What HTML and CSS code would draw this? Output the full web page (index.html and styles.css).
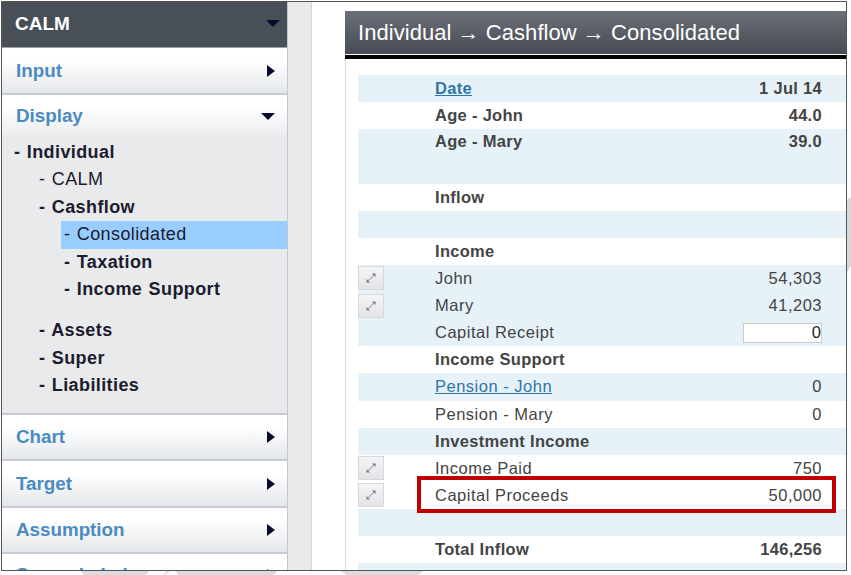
FILE: index.html
```html
<!DOCTYPE html>
<html lang="en">
<head>
    <meta charset="UTF-8">
    <title>CALM - Consolidated</title>
    <link rel="stylesheet" href="styles.css">
</head>
<body>
    <svg class="watermark" width="851" height="575" viewBox="0 0 851 575">
        <polygon points="80,570 150,570 146,575 84,575" fill="#dcdcdc"/>
        <polygon points="163,575 168,570 171,570 165,575" fill="#dcdcdc"/>
        <polygon points="175,570 278,570 274,575 178,575" fill="#dcdcdc"/>
        <polygon points="338,570 425,570 418,575 347,575" fill="#dcdcdc"/>
        <polygon points="847,200 851,197 851,266 847,272" fill="#d8d8d8"/>
    </svg>
    <div class="frame">
        <div class="sidebar">
            <div class="side-head">
                <span>CALM</span>
                <span class="arrow-down"></span>
            </div>
            <div class="side-item">
                <span>Input</span>
                <span class="arrow-right"></span>
            </div>
            <div class="side-item open">
                <span>Display</span>
                <span class="arrow-down"></span>
            </div>
            <div class="side-tree">
                <div class="node lvl1 bold">- Individual</div>
                <div class="node lvl2">- CALM</div>
                <div class="node lvl2 bold">- Cashflow</div>
                <div class="node lvl3 selected">- Consolidated</div>
                <div class="node lvl3 bold">- Taxation</div>
                <div class="node lvl3 bold">- Income Support</div>
                <div class="node lvl2 bold group-start">- Assets</div>
                <div class="node lvl2 bold">- Super</div>
                <div class="node lvl2 bold">- Liabilities</div>
            </div>
            <div class="side-item">
                <span>Chart</span>
                <span class="arrow-right"></span>
            </div>
            <div class="side-item">
                <span>Target</span>
                <span class="arrow-right"></span>
            </div>
            <div class="side-item">
                <span>Assumption</span>
                <span class="arrow-right"></span>
            </div>
            <div class="side-item cut">
                <span>Scenario Lab</span>
                <span class="arrow-right"></span>
            </div>
        </div>
        <div class="gutter"></div>
        <div class="main">
            <div class="panel">
                <div class="panel-title">Individual → Cashflow → Consolidated</div>
                <div class="panel-rule"></div>
                <table class="cash-table">
                    <tr class="alt bold"><td class="c-btn"></td><td><a href="#">Date</a></td><td class="num">1 Jul 14</td></tr>
                    <tr class="bold"><td class="c-btn"></td><td>Age - John</td><td class="num">44.0</td></tr>
                    <tr class="alt bold tall"><td class="c-btn"></td><td>Age - Mary</td><td class="num">39.0</td></tr>
                    <tr class="bold"><td class="c-btn"></td><td>Inflow</td><td class="num"></td></tr>
                    <tr class="alt"><td class="c-btn"></td><td></td><td class="num"></td></tr>
                    <tr class="bold"><td class="c-btn"></td><td>Income</td><td class="num"></td></tr>
                    <tr class="alt"><td class="c-btn"><span class="expand"><svg width="14" height="14" viewBox="0 0 14 14"><path d="M4 10 L10 4" stroke="#b4b8bc" stroke-width="1.5"/><path d="M8 2.5 H11.5 V6 Z M2.5 8 V11.5 H6 Z" fill="#74797e"/></svg></span></td><td>John</td><td class="num">54,303</td></tr>
                    <tr class="alt"><td class="c-btn"><span class="expand"><svg width="14" height="14" viewBox="0 0 14 14"><path d="M4 10 L10 4" stroke="#b4b8bc" stroke-width="1.5"/><path d="M8 2.5 H11.5 V6 Z M2.5 8 V11.5 H6 Z" fill="#74797e"/></svg></span></td><td>Mary</td><td class="num">41,203</td></tr>
                    <tr class="alt"><td class="c-btn"></td><td>Capital Receipt</td><td class="num"><input class="amount" type="text" value="0"></td></tr>
                    <tr class="bold"><td class="c-btn"></td><td>Income Support</td><td class="num"></td></tr>
                    <tr class="alt"><td class="c-btn"></td><td><a href="#">Pension - John</a></td><td class="num">0</td></tr>
                    <tr><td class="c-btn"></td><td>Pension - Mary</td><td class="num">0</td></tr>
                    <tr class="alt bold"><td class="c-btn"></td><td>Investment Income</td><td class="num"></td></tr>
                    <tr><td class="c-btn"><span class="expand"><svg width="14" height="14" viewBox="0 0 14 14"><path d="M4 10 L10 4" stroke="#b4b8bc" stroke-width="1.5"/><path d="M8 2.5 H11.5 V6 Z M2.5 8 V11.5 H6 Z" fill="#74797e"/></svg></span></td><td>Income Paid</td><td class="num">750</td></tr>
                    <tr><td class="c-btn"><span class="expand"><svg width="14" height="14" viewBox="0 0 14 14"><path d="M4 10 L10 4" stroke="#b4b8bc" stroke-width="1.5"/><path d="M8 2.5 H11.5 V6 Z M2.5 8 V11.5 H6 Z" fill="#74797e"/></svg></span></td><td>Capital Proceeds</td><td class="num">50,000</td></tr>
                    <tr class="alt"><td class="c-btn"></td><td></td><td class="num"></td></tr>
                    <tr class="bold"><td class="c-btn"></td><td>Total Inflow</td><td class="num">146,256</td></tr>
                    <tr class="alt"><td class="c-btn"></td><td></td><td class="num"></td></tr>
                </table>
                <div class="callout"></div>
            </div>
        </div>
    </div>
</body>
</html>
```

FILE: styles.css
```css
body {
    margin: 0;
    background: #fff;
    font-family: 'Liberation Sans', Arial, sans-serif;
    color: #333;
}
.watermark {
    position: absolute;
    left: 0;
    top: 0;
}
.frame {
    position: relative;
    display: flex;
    box-sizing: border-box;
    width: 846px;
    height: 570px;
    margin: 1px 0 0 1px;
    border: 1px solid #555;
    overflow: hidden;
    background: #fff;
}
.sidebar {
    width: 285px;
    flex-shrink: 0;
    background: #e8eaec;
    border-right: 1px solid #c4c6d0;
}
.side-head {
    display: flex;
    justify-content: space-between;
    align-items: center;
    box-sizing: border-box;
    height: 46px;
    padding: 0 7px 2px 13px;
    background: #494f57;
    color: #fff;
    font-size: 19px;
    font-weight: bold;
    border-bottom: 1px solid #a0a3ab;
}
.side-item {
    display: flex;
    justify-content: space-between;
    align-items: center;
    box-sizing: border-box;
    height: 46.5px;
    padding: 0 12px 0 14px;
    background: linear-gradient(#fff 25%, #e4e7ea);
    border-bottom: 2px solid #c8cad4;
    border-top: 1px solid #fff;
    color: #4a8bc2;
    font-size: 18.8px;
    font-weight: bold;
}
.side-item.open {
    background: linear-gradient(#fff 25%, #e8eaec);
    border-bottom: 0;
    height: 44px;
    padding-bottom: 2px;
}
.side-item.cut {
    padding-bottom: 3px;
}
.arrow-right {
    width: 0;
    height: 0;
    border-left: 8px solid #0a0a30;
    border-top: 6px solid transparent;
    border-bottom: 6px solid transparent;
}
.arrow-down {
    width: 0;
    height: 0;
    border-top: 7px solid #0a0a30;
    border-left: 7px solid transparent;
    border-right: 7px solid transparent;
}
.side-tree {
    box-sizing: border-box;
    height: 276px;
    border-bottom: 2px solid #c8cad4;
}
.node {
    height: 27.5px;
    line-height: 27.5px;
    font-size: 18px;
    letter-spacing: 0.4px;
    word-spacing: 1px;
    color: #1c1c2e;
}
.node.bold {
    font-weight: bold;
}
.lvl1 { padding-left: 12px; }
.lvl2 { padding-left: 37px; }
.lvl3 { padding-left: 62px; }
.node.selected {
    margin-left: 59px;
    padding-left: 3px;
    background: #99ccff;
}
.group-start {
    margin-top: 13.5px;
}
.gutter {
    width: 23px;
    flex-shrink: 0;
    background: #e8eaec;
    border-right: 1px solid #d4d6da;
}
.main {
    flex: 1;
    padding: 9px 0 0 33px;
    min-width: 0;
}
.panel {
    position: relative;
    height: 100%;
    border-left: 1px solid #d8d8d8;
}
.panel-title {
    height: 43px;
    line-height: 44px;
    padding-left: 13px;
    background: linear-gradient(#6b6f78, #474c54);
    color: #fff;
    font-size: 22px;
    letter-spacing: 0.05px;
    margin-left: -1px;
    white-space: nowrap;
}
.panel-rule {
    height: 4px;
    margin: 1px 0 0 -1px;
    background: #000;
}
.cash-table {
    width: 488px;
    margin: 16px 0 0 12px;
    border-collapse: collapse;
    font-size: 16.5px;
    letter-spacing: 0.5px;
    color: #444;
}
.cash-table td {
    height: 27.13px;
    padding: 0;
}
.cash-table tr.alt {
    background: #e6f2f8;
}
.cash-table tr.bold td {
    font-weight: bold;
    letter-spacing: 0.3px;
}
.cash-table tr.tall td {
    height: 54.3px;
    vertical-align: top;
    padding-top: 3px;
    box-sizing: border-box;
}
.cash-table a {
    color: #2f75a8;
}
.c-btn {
    width: 77px;
    vertical-align: middle;
}
.num {
    text-align: right;
    padding-right: 24px !important;
}
.expand {
    display: flex;
    align-items: center;
    justify-content: center;
    box-sizing: border-box;
    width: 26px;
    height: 24px;
    background: linear-gradient(#f4f5f6, #e2e4e7);
    border: 1px solid #d6d8db;
}
.amount {
    display: block;
    box-sizing: border-box;
    width: 79px;
    height: 20px;
    margin: 0 0 0 auto;
    padding: 0;
    border: 1px solid #ccc;
    background: #fff;
    text-align: right;
    font: 16.5px 'Liberation Sans', Arial, sans-serif;
    color: #222;
}
.callout {
    position: absolute;
    left: 71px;
    top: 465px;
    width: 419px;
    height: 37px;
    box-sizing: border-box;
    border: 4px solid #c00000;
}
```
